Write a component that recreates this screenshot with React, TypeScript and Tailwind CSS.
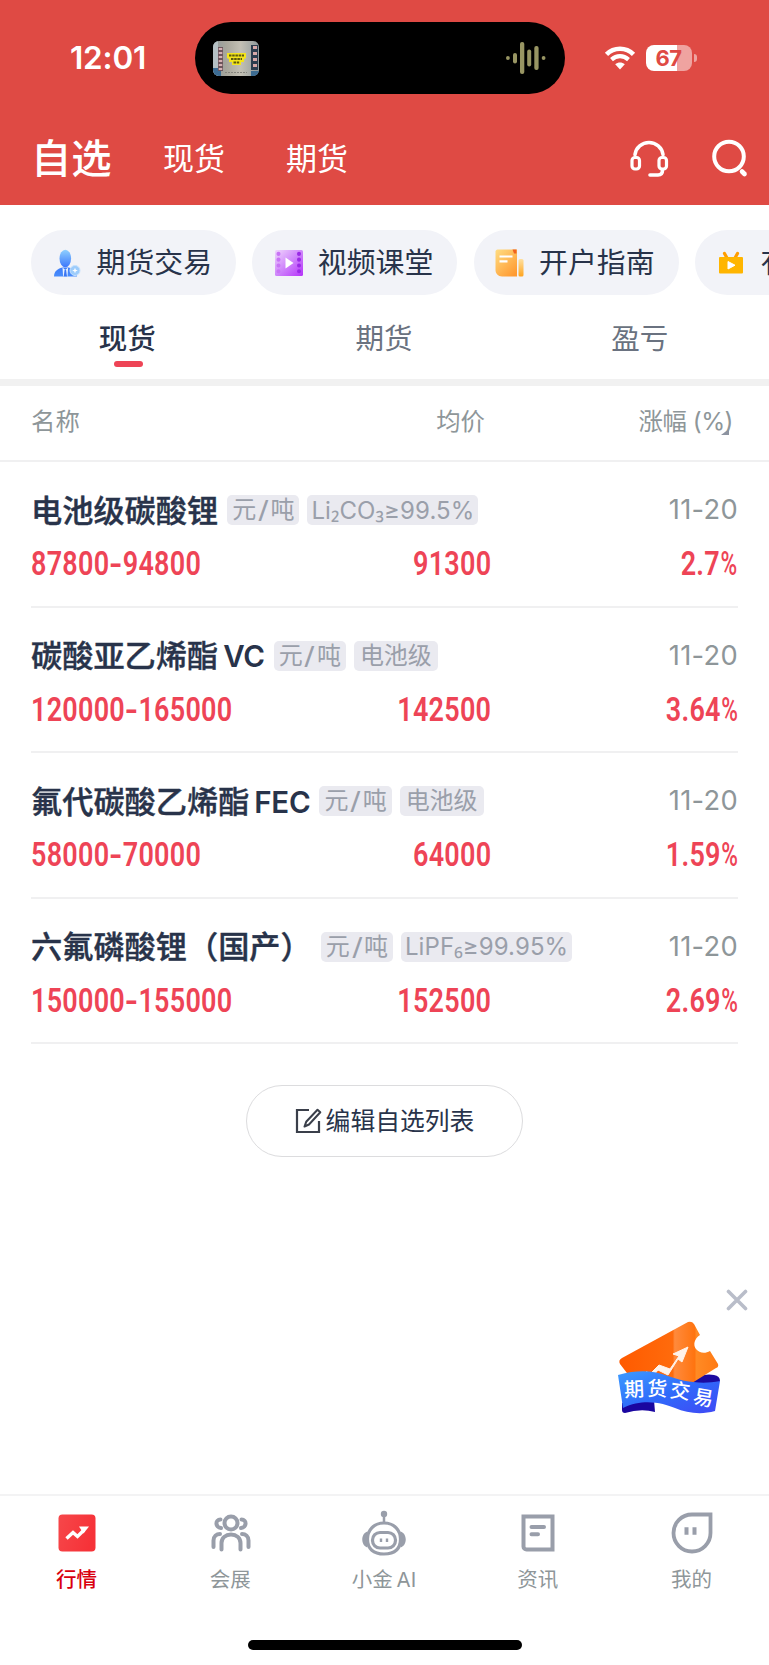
import type { ReactNode } from 'react';

type Row = { name: string; latin?: string; tags: string[]; range: string; avg: string; pct: string };

const rows: Row[] = [
  { name: '电池级碳酸锂', tags: ['元/吨', 'Li₂CO₃≥99.5%'], range: '87800-94800', avg: '91300', pct: '2.7%' },
  { name: '碳酸亚乙烯酯', latin: 'VC', tags: ['元/吨', '电池级'], range: '120000-165000', avg: '142500', pct: '3.64%' },
  { name: '氟代碳酸乙烯酯', latin: 'FEC', tags: ['元/吨', '电池级'], range: '58000-70000', avg: '64000', pct: '1.59%' },
  { name: '六氟磷酸锂（国产）', tags: ['元/吨', 'LiPF₆≥99.95%'], range: '150000-155000', avg: '152500', pct: '2.69%' },
];

function StatusBar() {
  return (
    <div className="flex h-[72px] items-center">
      <div className="w-[195px] pl-[70px] text-[31.5px] font-semibold leading-none tracking-[-0.2px]">12:01</div>
      <div className="flex h-[72px] w-[370px] items-center justify-between rounded-full bg-black pl-[18px] pr-[19px]">
        <svg width="46" height="35" viewBox="0 0 46 35">
          <defs>
            <clipPath id="thumb"><rect width="46" height="35" rx="6" /></clipPath>
            <linearGradient id="thumbBg" x1="0" x2="1">
              <stop offset="0" stopColor="#8f989c" />
              <stop offset=".3" stopColor="#a9a79c" />
              <stop offset=".6" stopColor="#c3c0b4" />
              <stop offset="1" stopColor="#8f9a9c" />
            </linearGradient>
          </defs>
          <g clipPath="url(#thumb)">
            <rect width="46" height="35" fill="url(#thumbBg)" />
            <rect x="0" y="0" width="5" height="35" fill="#b5c0c4" />
            <rect x="0" y="27" width="8" height="8" fill="#3c6c94" />
            <rect x="5" y="6" width="5" height="24" fill="#6d555c" />
            <path d="M7.500 7v22" stroke="#d5b0b4" strokeWidth="3.500" strokeDasharray="2 2" />
            <rect x="38" y="4" width="7" height="25" fill="#2b3d4e" />
            <path d="M42 5v24" stroke="#d7a9a8" strokeWidth="4" strokeDasharray="3 3" />
            <rect x="38" y="30" width="8" height="5" fill="#3d6c92" />
            <path d="M12 31.500h22" stroke="#86857e" strokeWidth="1.2" strokeDasharray="2 1" />
            <path d="M14 12h19v5l-2 1v3h-3v3h-9v-3h-3v-3l-2-1z" fill="#f3e51b" />
            <path d="M16 14.500h15M18 18h11M20.500 21.500h6" stroke="#5c570e" strokeWidth="1.8" strokeDasharray="2.500 .7" />
          </g>
        </svg>
        <svg width="40" height="34" viewBox="0 0 40 34" fill="#989563">
          <circle cx="1.900" cy="17" r="1.900" />
          <rect x="7" y="12" width="4" height="10.500" rx="2" />
          <rect x="14" y="1" width="4.300" height="32" rx="2" />
          <rect x="21.200" y="8.500" width="4" height="17" rx="2" />
          <rect x="28.300" y="5" width="4.300" height="24" rx="2" />
          <circle cx="37.600" cy="17" r="1.900" />
        </svg>
      </div>
      <svg className="ml-[39px]" width="32" height="24" viewBox="0 0 32 24" fill="none" stroke="#fff">
        <path d="M2.500 8.300C10 .8 22 .8 29.500 8.300" strokeWidth="4.600" />
        <path d="M7.500 13.600c5-4.600 12-4.600 17 0" strokeWidth="4.200" />
        <path d="M16 23.500l-4.800-5.200c2.800-2.500 6.800-2.500 9.600 0z" fill="#fff" stroke="none" />
      </svg>
      <div className="ml-[10px] flex h-[26px] w-[46px] items-center justify-center rounded-[8px] bg-[linear-gradient(90deg,#fff_67%,#efa3a0_67%)] pr-[1px] text-[22px] font-bold leading-none tracking-[-0.5px] text-[#df4a44]">
        67
      </div>
      <div className="ml-[2px] h-[8px] w-[3px] rounded-r-full bg-[#efa3a0]" />
    </div>
  );
}

function UserIcon() {
  return (
    <svg width="28" height="28" viewBox="0 0 28 28">
      <defs>
        <linearGradient id="u1" x2="0" y2="1"><stop stopColor="#8fd0ff" /><stop offset="1" stopColor="#3d78fb" /></linearGradient>
        <linearGradient id="u2" x2="0" y2="1"><stop stopColor="#3c7cf9" /><stop offset="1" stopColor="#4a8dfb" /></linearGradient>
      </defs>
      <path d="M1 27.500c0-5 3-7.500 8.500-9h6c5.500 1.500 8.500 4 8.500 9z" fill="url(#u2)" />
      <path d="M9.500 18.500l2.800 2.500 2.800-2.500-.6 9h-4.400z" fill="#eaf3ff" />
      <path d="M11.600 21h1.500l.9 6.500h-3.300z" fill="#3b76f3" />
      <ellipse cx="12.300" cy="9.500" rx="5.800" ry="8.700" fill="url(#u1)" />
      <circle cx="22" cy="21.500" r="5" fill="#9dccfb" stroke="#c8e2fd" />
      <path d="M22 18.700l.8 2 2 .8-2 .8-.8 2-.8-2-2-.8 2-.8z" fill="#fff" />
    </svg>
  );
}

function FilmIcon() {
  return (
    <svg width="28" height="28" viewBox="0 0 28 28">
      <defs>
        <linearGradient id="f1" x1="0" y1="0" x2="1" y2="1"><stop stopColor="#f0d6fd" /><stop offset=".5" stopColor="#cf86fb" /><stop offset="1" stopColor="#b632fa" /></linearGradient>
      </defs>
      <rect x="0" y="1" width="28" height="26" rx="1.500" fill="url(#f1)" />
      <path d="M3.500 4.800v19" stroke="#c873f5" strokeWidth="4" strokeLinecap="round" strokeDasharray=".1 5.700" />
      <path d="M24 4.800v19" stroke="#9a2ae6" strokeWidth="4" strokeLinecap="round" strokeDasharray=".1 5.700" />
      <path d="M10.500 8.500v11l8-5.500z" fill="#fff" />
    </svg>
  );
}

function GuideIcon() {
  return (
    <svg width="29" height="28" viewBox="0 0 29 28">
      <defs>
        <linearGradient id="g1" x1="0" y1="0" x2=".8" y2="1"><stop stopColor="#ffdd82" /><stop offset="1" stopColor="#ff9a31" /></linearGradient>
        <linearGradient id="g2" x2="0" y2="1"><stop stopColor="#ffe0a0" /><stop offset="1" stopColor="#ffa41f" /></linearGradient>
      </defs>
      <path d="M2.500.5H22v27H7c-4 0-6.500-3-6.500-6.500v-18.500c0-1 1-2 2-2z" fill="url(#g1)" />
      <rect x="23.500" y="10" width="5" height="17.500" rx="1.500" fill="url(#g2)" />
      <path d="M17.500 .5h4v4h-2.500z" fill="#f0631f" />
      <path d="M4.500 7.500h13M4.500 12.300h8" stroke="#fff" strokeWidth="2.200" />
    </svg>
  );
}

function TvIcon() {
  return (
    <svg width="24" height="24" viewBox="0 0 24 24">
      <path d="M5.500 2.500L8 7M18.500 2.500L16 7" stroke="#ff9d00" strokeWidth="3.200" strokeLinecap="round" />
      <rect x="0" y="6" width="24" height="16.500" rx="1" fill="#ffb500" />
      <path d="M9 10.500v7.500l7-3.800z" fill="#fff" stroke="#fff" strokeLinejoin="round" />
    </svg>
  );
}

function Chip({ icon, label }: { icon: ReactNode; label: string }) {
  return (
    <div className="flex h-[65px] w-[205px] shrink-0 items-center rounded-full bg-[#f2f3f8] text-[28.9px] leading-none text-[#28334a]">
      <div className="flex w-[65.500px] shrink-0 justify-center pl-[7px]">{icon}</div>
      <span className="whitespace-nowrap pt-[1px]">{label}</span>
    </div>
  );
}

function Num({ children, origin }: { children: string; origin: 'left' | 'right' }) {
  return (
    <span className={`inline-block whitespace-nowrap scale-x-[0.83] font-[Roboto] text-[32.500px] font-semibold leading-none tracking-[0.3px] ${origin === 'left' ? 'origin-left' : 'origin-right'}`}>
      {children.split(/([-%])/).filter(Boolean).map((part, i) =>
        part === '-' ? <span key={i} className="mx-[2px] inline-block scale-x-[1.35]">-</span>
        : part === '%' ? <span key={i} className="-ml-[3px] inline-block origin-right scale-x-[0.84] font-medium">%</span>
        : part,
      )}
    </span>
  );
}

function Tag({ text }: { text: string }) {
  const pad = text.includes('/') ? 'px-[5px]' : text.includes('≥') ? 'px-[4px]' : 'px-[6px]';
  return (
    <span className={`flex h-[30px] items-center whitespace-nowrap rounded-[5px] bg-[#eaeaf0] text-[24px] leading-none text-[#9a9faa] ${pad}`}>
      <span className={text.includes('≥') ? 'tracking-[0.1px]' : ''}>
        {text.split(/([₂₃₆/])/).map((part, i) =>
          part === '/' ? <span key={i} className="mx-[2.800px] inline-block origin-center scale-x-[1.3]">/</span>
          : '₂₃₆'.includes(part) && part ? <span key={i} className="font-['Noto_Sans']">{part}</span>
          : part,
        )}
      </span>
    </span>
  );
}

function QuoteRow({ row }: { row: Row }) {
  return (
    <div className="h-[145.500px] border-b-2 border-[#f0f0f1] pt-[30px]">
      <div className="flex h-[36px] items-center">
        <div className="flex items-center whitespace-nowrap pt-[3px] text-[31.2px] font-medium leading-none text-[#28334a] [-webkit-text-stroke:0.4px_#28334a]">
          {row.name}
          {row.latin && <span className="ml-[5px] text-[29.500px] font-semibold tracking-[-0.3px] [-webkit-text-stroke:0]">{row.latin}</span>}
        </div>
        <div className="ml-[9px] flex gap-[8px]">
          {row.tags.map((tag) => <Tag key={tag} text={tag} />)}
        </div>
        <span className="ml-auto text-[27.300px] leading-none tracking-[0.3px] text-[#8e9699]">11-20</span>
      </div>
      <div className="mt-[20px] flex items-center text-[#ee4456]">
        <div className="w-[230px]"><Num origin="left">{row.range}</Num></div>
        <div className="w-[230px] text-right"><Num origin="right">{row.avg}</Num></div>
        <div className="flex-1 text-right"><Num origin="right">{row.pct}</Num></div>
      </div>
    </div>
  );
}

function TicketBadge() {
  return (
    <svg width="108" height="98" viewBox="0 0 108 98">
      <defs>
        <linearGradient id="t1" x1="0" x2="1"><stop stopColor="#ff5a00" /><stop offset=".54" stopColor="#ff6b0c" /><stop offset=".56" stopColor="#ff8a3c" /><stop offset=".76" stopColor="#ff7410" /><stop offset=".78" stopColor="#ff8a24" /><stop offset="1" stopColor="#ff7a14" /></linearGradient>
        <linearGradient id="t2" x1="0" y1="0" x2="1" y2="1"><stop stopColor="#3d9bff" /><stop offset=".5" stopColor="#2f6bfa" /><stop offset="1" stopColor="#4048f5" /></linearGradient>
      </defs>
      <path d="M6 84q16-6 32-3l1 12q-14-4-30 1-3 0-3-3z" fill="#1a06a0" />
      <path d="M70 62q16-8 28-6 6 1 6 6l-8 10z" fill="#1c0aa0" />
      <path d="M4 45q-2-4 2-6L72 3q4-1 6 2l6 11c-6 4-7 10-4 14s9 5 14 2l8 13q1 3-2 4L76 64 14 58z" fill="url(#t1)" />
      <path d="M30 53l5 1 8-8 11 4 9-13-6-2 15-7-6 15-4-3-10 16-10-5-5 6z" fill="#fff3ea" stroke="#fff3ea" strokeWidth="1" strokeLinejoin="round" />
      <path d="M2 56c22-6 36-4 50 1s32 9 52 5l-5 30c-14 4-28 2-40-3s-32-10-52 0z" fill="url(#t2)" />
      <g fill="#fff" fontSize="20" fontWeight="500">
        <text x="8.500" y="78" transform="rotate(-3 10 79)">期</text>
        <text x="31" y="76.500" transform="rotate(2 32 77)">货</text>
        <text x="53" y="78" transform="rotate(8 54 79)">交</text>
        <text x="76" y="84" transform="rotate(10 76 85)">易</text>
      </g>
    </svg>
  );
}

const navItems: { label: string; icon: ReactNode }[] = [
  {
    label: '行情',
    icon: (
      <svg width="46" height="46" viewBox="0 0 46 46">
        <defs><linearGradient id="n1" x1="0" x2="1" y2=".3"><stop stopColor="#f6474a" /><stop offset="1" stopColor="#f63238" /></linearGradient></defs>
        <rect x="4.500" y="4.500" width="37" height="37" rx="4" fill="url(#n1)" />
        <path d="M12.500 28.500l6.500-6 4.500 4 6.500-6.500" fill="none" stroke="#fff" strokeWidth="3.400" />
        <path d="M25 16.500h10l-5.500 7z" fill="#fff" />
      </svg>
    ),
  },
  {
    label: '会展',
    icon: (
      <svg width="46" height="46" viewBox="0 0 46 46" fill="none" stroke="#999eaa" strokeWidth="4" strokeLinecap="round">
        <circle cx="23" cy="13" r="6.500" />
        <path d="M13.500 39.500v-6.500c0-5 4-8.500 9.500-8.500s9.500 3.500 9.500 8.500v6.500" />
        <path d="M12.500 9.500c-5.500 0-5.500 8 .5 8.500M33.500 9.500c5.500 0 5.500 8-.5 8.500M5.500 37v-6.500c0-4 3-6.500 6.500-6.500M40.500 37v-6.500c0-4-3-6.500-6.500-6.500" />
      </svg>
    ),
  },
  {
    label: '小金 AI',
    icon: (
      <svg width="46" height="46" viewBox="0 0 46 46" fill="none" stroke="#999eaa" strokeWidth="3.200">
        <circle cx="23" cy="4" r="3.200" fill="#999eaa" stroke="none" />
        <path d="M23 5v8" strokeWidth="2.500" />
        <path d="M23 13c10.500 0 16.500 7.500 16.500 16 0 10-6 15-16.500 15S6.500 39 6.500 29c0-8.500 6-16 16.500-16z" />
        <path d="M6.500 21.500c-7 2-7 14 0 16zM39.500 21.500c7 2 7 14 0 16z" fill="#999eaa" stroke="none" />
        <rect x="11.500" y="22.500" width="23" height="15.500" rx="7.500" />
        <path d="M20 28.500v3.600M26 28.500v3.600" strokeWidth="2.400" />
      </svg>
    ),
  },
  {
    label: '资讯',
    icon: (
      <svg width="46" height="46" viewBox="0 0 46 46" fill="none" stroke="#999eaa" strokeWidth="4">
        <path d="M8.500 6.500h29v33h-26a3 3 0 0 1-3-3z" />
        <path d="M16.500 17h12.500M16.500 24.300h6.500" strokeLinecap="round" />
      </svg>
    ),
  },
  {
    label: '我的',
    icon: (
      <svg width="46" height="46" viewBox="0 0 46 46" fill="none" stroke="#999eaa" strokeWidth="3.800">
        <path d="M23 4.500h18.500V23A18.500 18.500 0 1 1 23 4.500z" />
        <path d="M17.500 17.200v7.600M25.500 17.200v7.600" strokeWidth="4" />
      </svg>
    ),
  },
];

export default function App() {
  return (
    <div className="flex h-[1665px] w-[769px] flex-col overflow-hidden bg-white font-[Inter,'Noto_Sans_CJK_SC',sans-serif]">
      <header className="h-[205px] bg-[#df4a44] pt-[22px] text-white">
        <StatusBar />
        <div className="flex h-[130px] items-center pl-[31px] leading-none">
          <span className="w-[132px] text-[40.300px] font-medium">自选</span>
          <span className="w-[123px] pb-[1px] text-[31px]">现货</span>
          <span className="pb-[1px] text-[31px]">期货</span>
          <svg className="ml-auto" width="40" height="40" viewBox="0 0 40 40" fill="none" stroke="#fff" strokeWidth="3.600" strokeLinecap="round">
            <path d="M6 15.500c1-7 7-12 14-12s13 5 14 12" />
            <rect x="3" y="18.500" width="7.500" height="11.500" rx="3" strokeWidth="3.200" />
            <rect x="30" y="18.500" width="7.500" height="11.500" rx="3" strokeWidth="3.200" />
            <path d="M33.500 31c0 3.500-1.500 5-4.500 5h-8" />
          </svg>
          <svg className="ml-[40px] mr-[20px]" width="40" height="40" viewBox="0 0 40 40" fill="none" stroke="#fff" strokeWidth="4">
            <circle cx="20" cy="17.500" r="14.800" />
            <path d="M33 32.500l2.500 2.500" strokeWidth="4.600" strokeLinecap="round" />
          </svg>
        </div>
      </header>

      <div className="mt-[25px] flex gap-[16.300px] overflow-hidden pl-[31px]">
        <Chip icon={<UserIcon />} label="期货交易" />
        <Chip icon={<FilmIcon />} label="视频课堂" />
        <Chip icon={<GuideIcon />} label="开户指南" />
        <Chip icon={<TvIcon />} label="有色直播" />
      </div>

      <div className="grid h-[91px] grid-cols-3 border-b-[7px] border-[#f1f1f1] text-[28.500px] leading-none text-[#6a7280]">
        <div className="flex flex-col items-center pt-[30px] font-medium text-[#28334a]">
          <span className="pr-[2px]">现货</span>
          <div className="mt-[7px] h-[6px] w-[29px] rounded-full bg-[#ee4456]" />
        </div>
        <div className="pr-[1px] pt-[30px] text-center">期货</div>
        <div className="pr-[2px] pt-[30px] text-center">盈亏</div>
      </div>

      <div className="flex h-[76px] items-center border-b-2 border-[#f0f0f1] px-[31px] pb-[3px] text-[24.400px] leading-none text-[#8e9699]">
        <span className="w-[230px]">名称</span>
        <span className="w-[224px] text-right">均价</span>
        <span className="relative ml-auto mr-[5px] tracking-[-0.500px]">
          涨幅 (%)
          <svg className="absolute bottom-[-1px] right-[4px]" width="8" height="6" viewBox="0 0 8 6"><path d="M8 0v6H0z" fill="#8c93a0" /></svg>
        </span>
      </div>

      <main className="flex-1 px-[31px]">
        {rows.map((row) => <QuoteRow key={row.name} row={row} />)}
        <button className="mx-auto mt-[41px] flex h-[72px] w-[277px] items-center justify-center rounded-full border border-[#dcdcde] text-[24.800px] leading-none text-[#28334a]">
          <svg className="mr-[4px]" width="27" height="26" viewBox="0 0 27 26" fill="none" stroke="#3a3f4a" strokeWidth="2.200">
            <path d="M14 2H2v22h22V13" />
            <path d="M22.500 1.800l2.800 2.500L14 16.500l-4.500 2 1.700-4.700z" strokeWidth="2" strokeLinejoin="round" />
          </svg>
          编辑自选列表
        </button>
        <div className="mt-[132px] flex justify-end">
          <svg className="mr-[-10px]" width="22" height="22" viewBox="0 0 22 22" stroke="#b9bdc9" strokeWidth="3.600" strokeLinecap="round"><path d="M2.500 2.500l17 17M19.500 2.500l-17 17" /></svg>
        </div>
        <div className="mt-[8px] flex justify-end pr-[14px]"><TicketBadge /></div>
      </main>

      <nav className="h-[171px] border-t-2 border-[#f3f3f4] pt-[14px]">
        <div className="grid grid-cols-5">
          {navItems.map((item, i) => (
            <div key={item.label} className={`flex flex-col items-center text-[20.500px] leading-none ${i === 0 ? 'font-medium text-[#d9000f]' : 'text-[#8e9699]'}`}>
              {item.icon}
              <span className="mt-[14px] pr-[1px] [word-spacing:-2px]">{item.label}</span>
            </div>
          ))}
        </div>
        <div className="mx-auto mt-[49px] h-[10px] w-[274px] rounded-full bg-black" />
      </nav>
    </div>
  );
}
